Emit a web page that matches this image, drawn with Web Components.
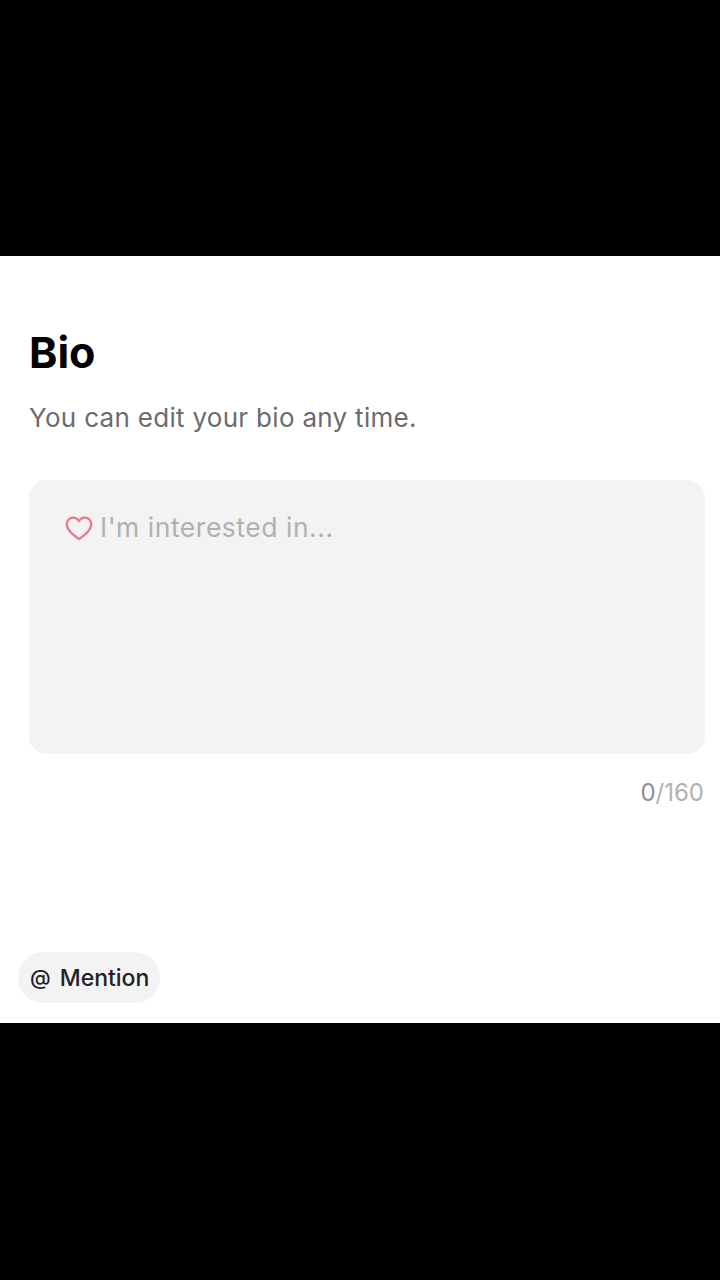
<!DOCTYPE html>
<html lang="en"><head><meta charset="utf-8"><title>Bio</title>
<style>
html,body{margin:0;padding:0;background:#000;}
body{width:720px;height:1280px;overflow:hidden;font-family:Inter,"Liberation Sans",sans-serif;}
</style></head><body>
<bio-screen></bio-screen>
<script>
function def(name,css,html){
  customElements.define(name,class extends HTMLElement{
    constructor(){super();this.attachShadow({mode:'open'}).innerHTML='<style>'+css+'</style>'+html;}
  });
}
const heart='M15 26C10 22.500 2.800 17.800 2.800 11 2.800 7.300 5.700 4.600 9 4.600c2.500 0 4.700 1.300 6 3.500 1.300-2.200 3.500-3.500 6-3.500 3.300 0 6.200 2.700 6.200 6.400 0 6.800-7.200 11.500-12.200 15z';
def('bio-input',`
:host{display:block;box-sizing:border-box;width:676px;height:274px;margin-left:29px;background:#f3f3f3;border-radius:18px;padding:29px 0 0 35px;}
.row{display:flex;align-items:center;gap:6px;height:36px;font-size:26.5px;letter-spacing:.52px;color:#b0b0b3;}
svg{width:30px;height:30px;flex:none;position:relative;top:1px;}
`,`<div class="row"><svg viewBox="0 0 30 30" fill="none"><path d="${heart}" stroke="#f7ccd5" stroke-width="3.400" stroke-linejoin="round"/><path d="${heart}" stroke="#dc7389" stroke-width="1.600" stroke-linejoin="round"/></svg><span>I'm interested in...</span></div>`);
def('mention-chip',`
:host{display:inline-flex;align-items:center;box-sizing:border-box;width:142px;height:51px;margin-left:18px;padding-left:12px;gap:9px;background:#f3f3f3;border-radius:26px;font-size:23px;font-weight:500;color:#1f2029;}
.at{font-size:21px;font-weight:500;}
`,`<span class="at">@</span><span>Mention</span>`);
def('bio-screen',`
:host{display:flex;flex-direction:column;box-sizing:border-box;width:720px;height:767px;margin-top:256px;background:#fff;padding-top:74px;}
h1{margin:0 0 0 29px;font-size:43px;line-height:45px;font-weight:700;color:#000;}
p{margin:26px 0 45px 29px;font-size:26px;line-height:34px;letter-spacing:.3px;color:#6b6b70;font-weight:400;}
.count{margin:24px 16px 0 0;text-align:right;font-size:24px;line-height:30px;color:#b0b0b3;}
.count b{font-weight:400;color:#8f8f93;}
.spacer{flex:1;}
mention-chip{margin-bottom:20px;align-self:flex-start;}
`,`<h1>Bio</h1><p>You can edit your bio any time.</p><bio-input></bio-input><div class="count"><b>0</b>/160</div><div class="spacer"></div><mention-chip></mention-chip>`);
</script>
</body></html>
